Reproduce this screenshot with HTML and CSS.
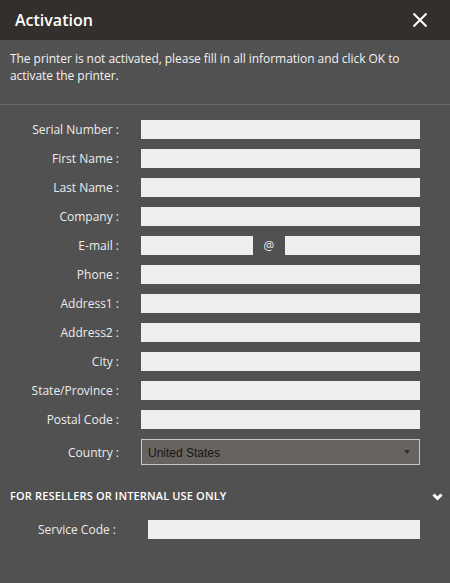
FILE: index.html
```html
<!DOCTYPE html>
<html>
<head>
<meta charset="utf-8">
<link rel="stylesheet" href="styles.css">
</head>
<body>
<div class="dialog">
  <div class="header">
    <span class="title">Activation</span>
    <svg class="close" width="16" height="16" viewBox="0 0 16 16"><path d="M1.5 1.5 L14.5 14.5 M14.5 1.5 L1.5 14.5" stroke="#ffffff" stroke-width="2" fill="none"/></svg>
  </div>
  <p class="desc">The printer is not activated, please fill in all information and click OK to activate the printer.</p>
  <div class="form">
    <label class="lbl">Serial Number :</label><input class="inp">
    <label class="lbl">First Name :</label><input class="inp">
    <label class="lbl">Last Name :</label><input class="inp">
    <label class="lbl">Company :</label><input class="inp">
    <label class="lbl">E-mail :</label>
    <div class="email"><input class="inp inp-user"><span class="at">@</span><input class="inp inp-domain"></div>
    <label class="lbl">Phone :</label><input class="inp">
    <label class="lbl">Address1 :</label><input class="inp">
    <label class="lbl">Address2 :</label><input class="inp">
    <label class="lbl">City :</label><input class="inp">
    <label class="lbl">State/Province :</label><input class="inp">
    <label class="lbl">Postal Code :</label><input class="inp">
    <label class="lbl lbl-country">Country :</label>
    <div class="select"><span class="select-text">United States</span><span class="caret"></span></div>
  </div>
  <div class="section">
    <span class="section-title">FOR RESELLERS OR INTERNAL USE ONLY</span>
    <svg class="chev" width="11" height="9" viewBox="0 0 11 9"><path d="M1.5 2.5 L5.5 6.5 L9.5 2.5" stroke="#ffffff" stroke-width="3" fill="none" stroke-linejoin="miter"/></svg>
  </div>
  <div class="service">
    <label class="lbl lbl-service">Service Code :</label><input class="inp inp-service">
  </div>
</div>
</body>
</html>
```
FILE: styles.css
```css
* { box-sizing: border-box; }
html, body { margin: 0; padding: 0; }
body { background: #515151; font-family: "Open Sans", "Noto Sans", sans-serif; }
.dialog { width: 450px; height: 583px; background: #515151; color: #ececec; }
.header {
  height: 40px; background: #332f2c; display: flex; align-items: center;
  justify-content: space-between; padding: 0 22px 0 15px;
}
.title { font-size: 16px; font-weight: 600; color: #ffffff; }
.close { display: block; }
.desc {
  margin: 0; padding: 10px 10px 20px; font-size: 12px; line-height: 17px; letter-spacing: -0.05px;
  color: #f2f2f2; border-bottom: 1px solid #6c6c6c; height: 65px;
}
.form {
  display: grid; grid-template-columns: 119px 279px; column-gap: 22px; row-gap: 10px;
  padding-top: 15px; align-items: center;
}
.lbl { font-size: 12px; text-align: right; color: #ececec; line-height: 19px; }
.inp {
  display: block; height: 19px; border: none; background: #efeeec; margin: 0; padding: 0;
  width: 100%; outline: none;
}
.email { display: flex; align-items: center; }
.inp-user { width: 112px; }
.at { width: 32px; text-align: center; font-size: 12px; color: #ececec; }
.inp-domain { flex: 1; }
.select {
  height: 26px; background: #67635f; border: 1px solid #c9c9c9; display: flex;
  align-items: center; justify-content: space-between; padding: 0 9px 0 6px;
}
.select-text { font-family: "Liberation Sans", Arial, sans-serif; font-size: 12px; color: #161616; padding-top: 2px; }
.caret { width: 0; height: 0; border-left: 3px solid transparent; border-right: 3px solid transparent; border-top: 4px solid #2e2e2e; }
.section {
  display: flex; justify-content: space-between; align-items: center;
  padding: 0 7px 0 10px; margin-top: 22px; height: 16px;
}
.section-title { font-size: 11px; font-weight: 600; color: #ffffff; letter-spacing: 0.15px; }
.chev { display: block; margin-top: 2px; }
.service { display: flex; align-items: center; margin-top: 17px; }
.lbl-service { width: 116px; }
.inp-service { width: 272px; margin-left: 32px; }
```
